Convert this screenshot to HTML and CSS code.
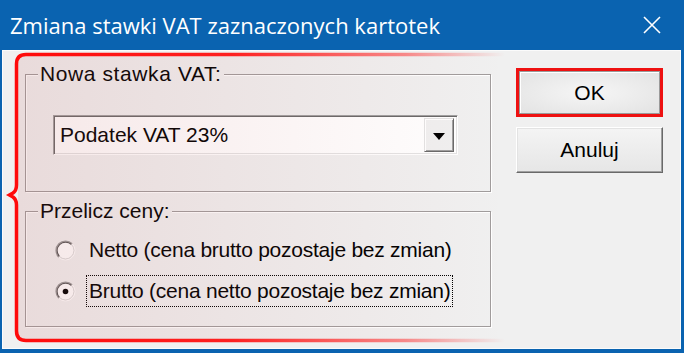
FILE: index.html
```html
<!DOCTYPE html>
<html lang="pl">
<head>
  <meta charset="UTF-8">
  <title>Zmiana stawki VAT zaznaczonych kartotek</title>
  <link rel="stylesheet" href="styles.css">
</head>
<body>

  <div class="window">
    <div class="titlebar">
      <span class="title">Zmiana stawki VAT zaznaczonych kartotek</span>
      <svg class="close" width="18" height="18" viewBox="0 0 18 18">
        <path d="M1 1 L17 17 M17 1 L1 17" stroke="#fff" stroke-width="1.6" fill="none"/>
      </svg>
    </div>

    <div class="client">
      <div class="groups">
        <fieldset class="group group-rate">
          <legend>Nowa stawka VAT:</legend>
          <div class="combo">
            <span class="combo-value">Podatek VAT 23%</span>
            <span class="combo-btn">
              <svg width="12" height="7" viewBox="0 0 12 7"><path d="M0 0 H12 L6 7 Z" fill="#000"/></svg>
            </span>
          </div>
        </fieldset>

        <fieldset class="group group-recalc">
          <legend>Przelicz ceny:</legend>
          <label class="radio">
            <svg class="radio-mark" width="21" height="21" viewBox="0 0 21 21">
              <circle cx="10.5" cy="10.5" r="8.5" fill="#fff"/>
              <path d="M3.78 17.22 A9.5 9.5 0 0 1 17.22 3.78" stroke="#9a9a9a" stroke-width="1.2" fill="none"/>
              <path d="M4.49 16.51 A8.5 8.5 0 0 1 16.51 4.49" stroke="#555" stroke-width="1.2" fill="none"/>
              <path d="M17.22 3.78 A9.5 9.5 0 0 1 3.78 17.22" stroke="#fff" fill="none"/>
              <path d="M16.51 4.49 A8.5 8.5 0 0 1 4.49 16.51" stroke="#dcdcdc" fill="none"/>
            </svg>
            <span class="radio-text">Netto (cena brutto pozostaje bez zmian)</span>
          </label>
          <label class="radio">
            <svg class="radio-mark" width="21" height="21" viewBox="0 0 21 21">
              <circle cx="10.5" cy="10.5" r="8.5" fill="#fff"/>
              <path d="M3.78 17.22 A9.5 9.5 0 0 1 17.22 3.78" stroke="#9a9a9a" stroke-width="1.2" fill="none"/>
              <path d="M4.49 16.51 A8.5 8.5 0 0 1 16.51 4.49" stroke="#555" stroke-width="1.2" fill="none"/>
              <path d="M17.22 3.78 A9.5 9.5 0 0 1 3.78 17.22" stroke="#fff" fill="none"/>
              <path d="M16.51 4.49 A8.5 8.5 0 0 1 4.49 16.51" stroke="#dcdcdc" fill="none"/>
              <circle cx="10.5" cy="10.5" r="2.8" fill="#000"/>
            </svg>
            <span class="radio-text focused">Brutto (cena netto pozostaje bez zmian)</span>
          </label>
        </fieldset>
      </div>

      <div class="buttons">
        <button class="btn btn-ok">OK</button>
        <button class="btn btn-cancel">Anuluj</button>
      </div>
    </div>

    <!-- red annotation bracket over the left part -->
    <svg class="mark" width="684" height="353" viewBox="0 0 684 353">
      <defs>
        <linearGradient id="tint" gradientUnits="userSpaceOnUse" x1="18" y1="0" x2="505" y2="0">
          <stop offset="0" stop-color="#be5a5a" stop-opacity="0.14"/>
          <stop offset="0.5" stop-color="#be5a5a" stop-opacity="0.07"/>
          <stop offset="1" stop-color="#be5a5a" stop-opacity="0"/>
        </linearGradient>
        <linearGradient id="line" gradientUnits="userSpaceOnUse" x1="8" y1="0" x2="505" y2="0">
          <stop offset="0" stop-color="#ff0a0a" stop-opacity="1"/>
          <stop offset="0.45" stop-color="#ff0a0a" stop-opacity="0.9"/>
          <stop offset="0.8" stop-color="#ff0a0a" stop-opacity="0.45"/>
          <stop offset="1" stop-color="#ff0a0a" stop-opacity="0"/>
        </linearGradient>
      </defs>
      <rect x="18" y="56" width="487" height="283" fill="url(#tint)"/>
      <path d="M505 54.5 H26 Q16.5 54.5 16.5 64 V185 Q16.5 190.5 13 193 L9.5 195 L13 197 Q16.5 199.5 16.5 205 V331 Q16.5 340.5 26 340.5 H505"
            stroke="url(#line)" stroke-width="3.5" fill="none"/>
    </svg>
  </div>

</body>
</html>
```

FILE: styles.css
```css
* {
  box-sizing: border-box;
}

body {
  margin: 0;
  font-family: "Liberation Sans", Arial, sans-serif;
  font-size: 21px;
  color: #000;
  background: #fff;
}

.window {
  position: relative;
  width: 684px;
  height: 353px;
  background-color: #0a63b0;
  display: flex;
  flex-direction: column;
  padding: 0 3px 4px 2px;
}

.titlebar {
  height: 50px;
  flex: none;
  display: flex;
  align-items: center;
  padding: 0 20px 0 8px;
  color: #fff;
  font-family: "Open Sans", "Noto Sans", sans-serif;
  font-size: 22px;
}

.title {
  flex: 1;
  line-height: 30px;
}

.client {
  flex: 1;
  display: flex;
  background-color: #f0f0f0;
  border: 1px solid #fbfbfb;
  padding-left: 22px;
}

.groups {
  width: 466px;
  padding-top: 11px;
  display: flex;
  flex-direction: column;
  gap: 7px;
}

.group {
  margin: 0;
  min-width: 0;
  border: 1px solid #a09c9c;
  box-shadow: 1px 1px 0 #fff, inset 1px 1px 0 #fff;
  padding: 0 0 0 12px;
}

.group legend {
  padding: 0 2px;
  line-height: 24px;
  background-color: #f0f0f0;
}

.group-rate legend {
  letter-spacing: 0.6px;
}

.group-rate {
  padding-top: 29px;
  padding-bottom: 36px;
}

.group-recalc {
  padding-top: 11px;
  padding-bottom: 19px;
}

.combo {
  margin-left: 15px;
  width: 405px;
  height: 40px;
  display: flex;
  align-items: center;
  background-color: #fff;
  border: 1px solid;
  border-color: #a0a0a0 #fff #fff #a0a0a0;
  box-shadow: inset 1px 1px 0 #696969, inset -1px -1px 0 #e3e3e3;
}

.combo-value {
  flex: 1;
  padding-left: 6px;
  line-height: 24px;
}

.combo-btn {
  width: 30px;
  height: 34px;
  margin-right: 3px;
  display: flex;
  align-items: center;
  justify-content: center;
  padding-top: 2px;
  background-color: #f0f0f0;
  border: 1px solid;
  border-color: #e3e3e3 #696969 #696969 #e3e3e3;
  box-shadow: inset 1px 1px 0 #fff, inset -1px -1px 0 #a0a0a0;
}

.radio {
  margin-left: 17px;
  height: 32px;
  display: flex;
  align-items: center;
}

.radio + .radio {
  margin-top: 9px;
}

.radio-mark {
  flex: none;
}

.radio-text {
  margin-left: 10px;
  padding: 3px 2px;
  line-height: 24px;
  letter-spacing: -0.25px;
  border: 1px dotted transparent;
}

.radio-text.focused {
  border-color: #000;
}

.buttons {
  margin-left: 25px;
  padding-top: 17px;
  display: flex;
  flex-direction: column;
  gap: 10px;
}

.btn {
  width: 147px;
  padding: 0;
  font: inherit;
  color: #000;
  background: linear-gradient(#f4f4f4, #e6e6e6);
  border: 1px solid;
  border-color: #fff #696969 #696969 #fff;
  box-shadow: inset -1px -1px 0 #a0a0a0, inset 1px 1px 0 #e3e3e3;
}

.btn-ok {
  height: 49px;
  border: 3px solid #ee1111;
  background: radial-gradient(ellipse at center, #f6f6f6, #e2e2e2);
  box-shadow: inset 0 0 0 1px #9a9a9a, inset 2px 2px 0 #fff;
}

.btn-cancel {
  height: 46px;
}

.mark {
  position: absolute;
  left: 0;
  top: 0;
  pointer-events: none;
}
```
